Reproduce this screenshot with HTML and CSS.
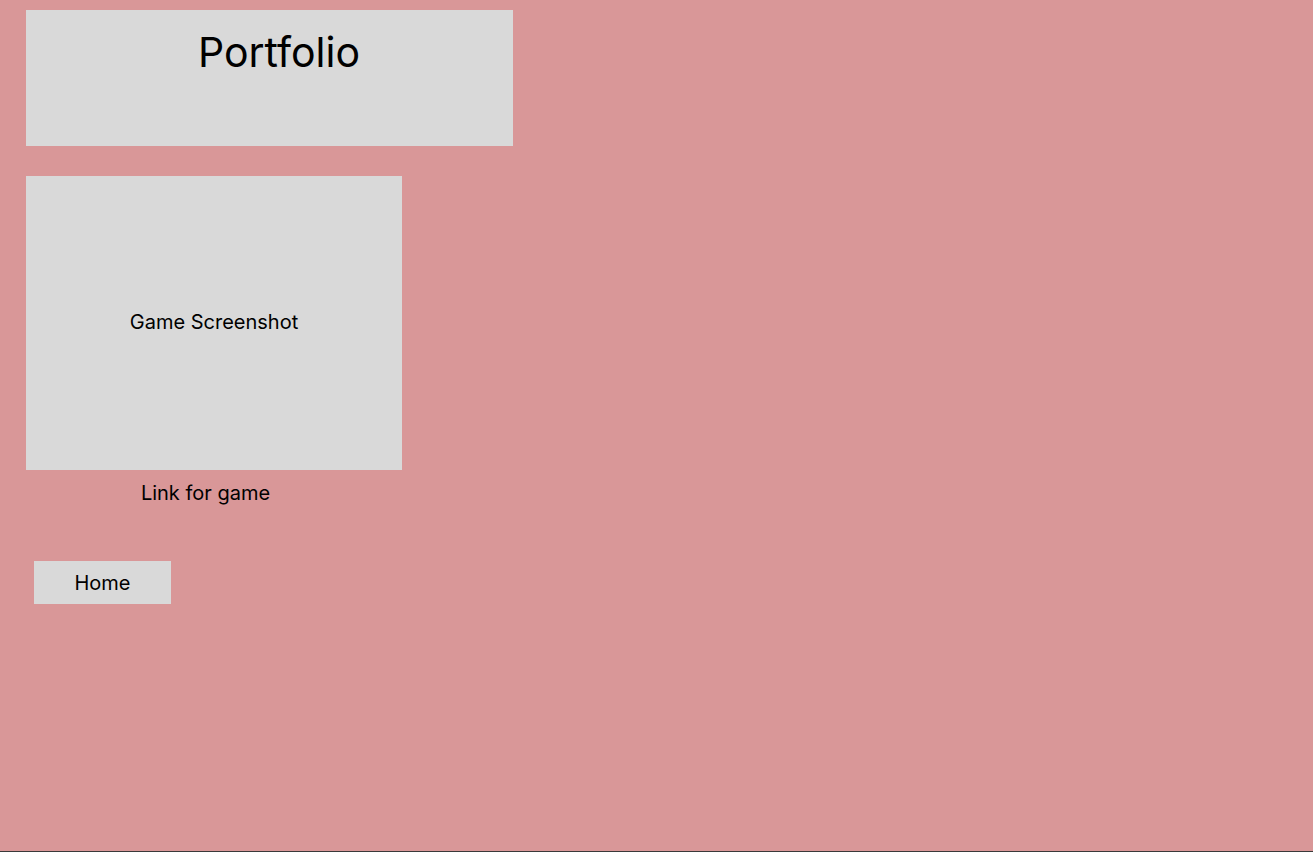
FILE: index.html
```html
<!DOCTYPE html>
<html>
<head>
<meta charset="utf-8">
<title>Portfolio</title>
<link rel="stylesheet" href="styles.css">
</head>
<body>
<main class="page">
  <header class="title-box">
    <h1 class="title">Portfolio</h1>
  </header>
  <section class="game">
    <div class="shot">Game Screenshot</div>
    <a class="game-link">Link for game</a>
  </section>
  <a class="home-btn">Home</a>
</main>
</body>
</html>
```

FILE: styles.css
```css
html, body {
  margin: 0;
  padding: 0;
  background: #3a3a3a;
}
body {
  font-family: Inter, "Noto Sans", sans-serif;
  color: #000;
}
.page {
  height: 851px;
  background: #d99798;
  padding: 10px 0 0 26px;
  box-sizing: border-box;
  display: flex;
  flex-direction: column;
  align-items: flex-start;
}
.title-box {
  width: 487px;
  height: 136px;
  background: #d9d9d9;
  box-sizing: border-box;
  padding: 18px 0 0 19px;
}
.title {
  margin: 0;
  font-weight: 400;
  font-size: 41px;
  line-height: 49px;
  text-align: center;
}
.game {
  margin-top: 30px;
  width: 376px;
  display: flex;
  flex-direction: column;
}
.shot {
  height: 294px;
  background: #d9d9d9;
  display: flex;
  align-items: center;
  justify-content: center;
  font-size: 20px;
  line-height: 24px;
  padding-bottom: 2px;
  box-sizing: border-box;
}
.game-link {
  margin-top: 11px;
  font-size: 20px;
  line-height: 24px;
  text-align: center;
  padding-right: 17px;
}
.home-btn {
  margin-top: 56px;
  margin-left: 8px;
  width: 137px;
  height: 43px;
  background: #d9d9d9;
  display: flex;
  align-items: center;
  justify-content: center;
  font-size: 20px;
  line-height: 24px;
}
```
